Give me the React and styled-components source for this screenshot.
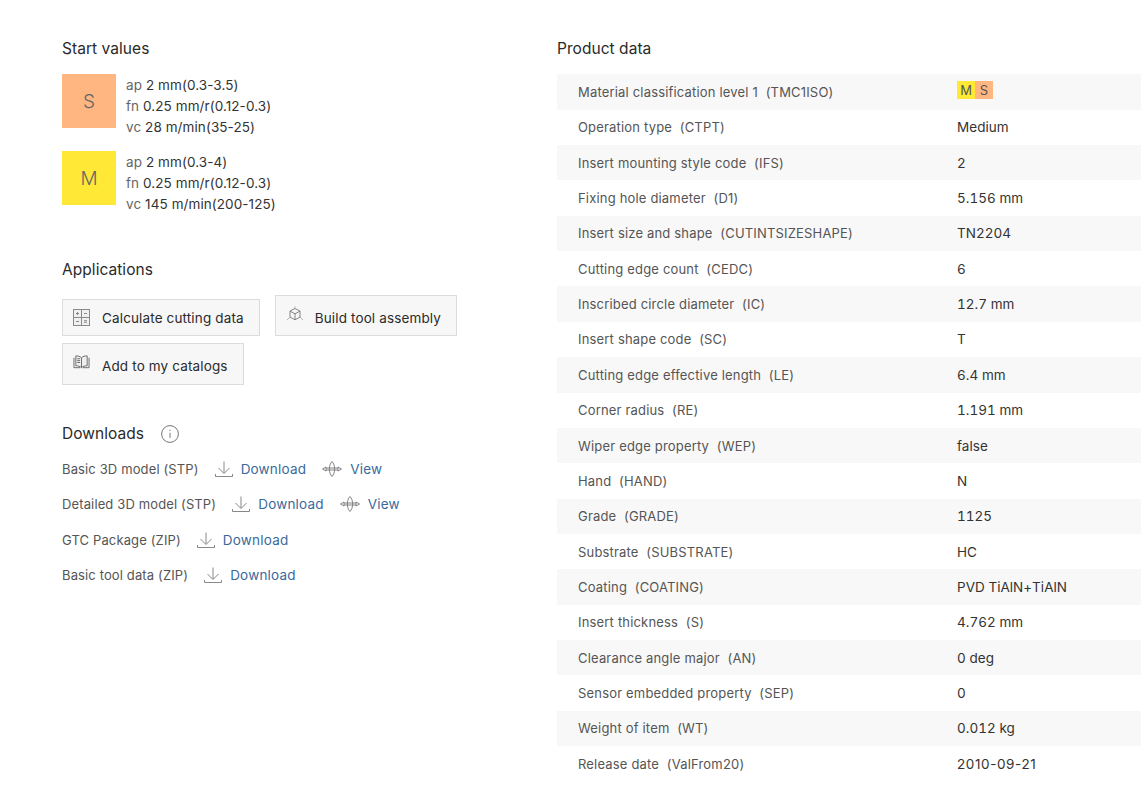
import React from "react";
import styled, { createGlobalStyle } from "styled-components";

const GlobalStyle = createGlobalStyle`
  html, body {
    margin: 0;
    padding: 0;
    background: #fff;
  }
  body {
    font-family: Inter, "Liberation Sans", Arial, sans-serif;
    color: #2b2b2b;
    overflow: hidden;
  }
`;

const Page = styled.div`
  display: grid;
  grid-template-columns: 495px 584px;
  padding: 38px 0 0 62px;
  width: 1141px;
  height: 807px;
  box-sizing: border-box;
`;

const Column = styled.div`
  display: flex;
  flex-direction: column;
`;

const Heading = styled.h2`
  margin: 0;
  font-size: 15.5px;
  line-height: 21px;
  font-weight: 400;
  color: #2a2a2a;
  letter-spacing: 0.05px;
`;

const StartList = styled.div`
  display: flex;
  flex-direction: column;
  gap: 13px;
  margin-top: 15px;
`;

const StartRow = styled.div`
  display: flex;
  gap: 10px;
`;

const MaterialBox = styled.div`
  width: 54px;
  height: 54px;
  display: flex;
  align-items: center;
  justify-content: center;
  background: ${(p) => p.$color};
  color: #666;
  font-size: 19px;
  font-weight: 300;
`;

const StartText = styled.div`
  font-size: 13.5px;
  line-height: 21px;
  color: #333;
  letter-spacing: 0.08px;
  margin-top: 1px;
  span {
    color: #666;
  }
`;

const AppSection = styled.div`
  margin-top: 44px;
`;

const ButtonWrap = styled.div`
  display: flex;
  flex-wrap: wrap;
  align-items: flex-end;
  column-gap: 15px;
  row-gap: 7px;
  margin-top: 15px;
  width: 420px;
`;

const AppButton = styled.div`
  display: flex;
  align-items: center;
  gap: ${(p) => p.$gap}px;
  height: ${(p) => p.$h}px;
  box-sizing: border-box;
  padding: ${(p) => p.$top}px 15px 0 10px;
  background: #f7f7f7;
  border: 1px solid #dcdcdc;
  font-size: 13.5px;
  color: #2a2a2a;
  letter-spacing: 0.14px;
  white-space: nowrap;
  svg {
    flex: none;
    margin-top: ${(p) => p.$iconShift}px;
  }
`;

const DownloadSection = styled.div`
  margin-top: 38px;
`;

const DownloadHead = styled.div`
  display: flex;
  align-items: center;
  gap: 17px;
`;

const DownloadList = styled.div`
  display: flex;
  flex-direction: column;
  gap: 15.4px;
  margin-top: 15px;
`;

const DownloadRow = styled.div`
  display: flex;
  align-items: center;
  height: 20px;
  font-size: 13px;
  color: #555;
  letter-spacing: 0.13px;
  white-space: nowrap;
`;

const FileLink = styled.a`
  display: flex;
  align-items: center;
  gap: 8px;
  margin-left: ${(p) => p.$left}px;
  color: #3a6a9c;
  font-size: 13.5px;
  letter-spacing: 0.2px;
  cursor: pointer;
`;

const DataTable = styled.div`
  display: flex;
  flex-direction: column;
  margin-top: 15.3px;
`;

const DataRow = styled.div`
  display: grid;
  grid-template-columns: 379px 1fr;
  align-items: center;
  height: 35.37px;
  padding-left: 21px;
  background: ${(p) => (p.$shade ? "#f8f8f8" : "#fff")};
`;

const DataLabel = styled.div`
  font-size: 13px;
  color: #555;
  letter-spacing: 0.18px;
  white-space: pre;
`;

const DataValue = styled.div`
  font-size: 13.5px;
  color: #333;
  font-variant-numeric: ${(p) => (p.$date ? "normal" : "tabular-nums")};
  letter-spacing: ${(p) => (p.$date ? "0.6px" : "0.03px")};
`;

const TagGroup = styled.div`
  display: flex;
  margin-top: -4px;
`;

const Tag = styled.span`
  width: 18px;
  height: 18px;
  display: flex;
  align-items: center;
  justify-content: center;
  background: ${(p) => p.$color};
  color: #555;
  font-size: 13px;
`;

const GridIcon = () => (
  <svg width="17" height="17" viewBox="0 0 17 17" fill="none" stroke="#8a8a8a" strokeWidth="1">
    <rect x="0.5" y="0.5" width="16" height="16" fill="#f0f0f0" />
    <path d="M8.5 0.5v16M0.5 8.5h16" />
    <path d="M3 4.5h3M4.5 3v3M11 4.5h3M3 12.5h3M11 11.7h3M11 13.3h3" />
  </svg>
);

const CubeIcon = () => (
  <svg width="18" height="18" viewBox="0 0 18 18" fill="none" stroke="#777" strokeWidth="0.9">
    <path d="M9 2.5l5 2.6v6l-5 2.7-5-2.7v-6z" />
    <path d="M4 5.100l5 2.700 5-2.700M9 7.800v6" />
    <path d="M9 0.500v2M1 14l3-2.900M17 14l-3-2.900" stroke="#aaa" />
  </svg>
);

const BookIcon = () => (
  <svg width="17" height="17" viewBox="0 0 18 17" fill="none" stroke="#666" strokeWidth="1">
    <path d="M9 3.500C7.500 2 5.500 1.500 3 1.500v10.500c2.500 0 4.500.5 6 2 1.500-1.500 3.500-2 6-2V1.500c-2.500 0-4.500.5-6 2z" fill="#f0f0f0" />
    <path d="M9 3.500V14M1 3.500v10.500h6.500M17 3.500v10.500h-6.500" />
    <path d="M4.500 4.500h3M4.500 6.500h3M4.500 8.500h3" />
  </svg>
);

const InfoIcon = () => (
  <svg width="18" height="18" viewBox="0 0 18 18" fill="none" stroke="#666" strokeWidth="0.9">
    <circle cx="9" cy="9" r="8.400" />
    <path d="M9 7.800v5M9 4.800v1.200" />
  </svg>
);

const DownloadIcon = () => (
  <svg width="18" height="16" viewBox="0 0 18 16" fill="none" stroke="#888" strokeWidth="1">
    <path d="M9 0.500v11.500M3.500 7l5.500 5.500 5.500-5.500" />
    <path d="M0.500 13v2.500h17v-2.500" />
  </svg>
);

const ViewIcon = () => (
  <svg width="20" height="16" viewBox="0 0 20 16" fill="none" stroke="#777" strokeWidth="0.9">
    <path d="M10 0.500C6.500 4 6.500 12 10 15.500 13.500 12 13.500 4 10 0.500z" />
    <path d="M0.500 8l3.500-2v4zM19.500 8l-3.500-2v4z" />
    <path d="M4 7h12M4 9h12" />
  </svg>
);

const productData = [
  ["Material classification level 1  (TMC1ISO)", null],
  ["Operation type  (CTPT)", "Medium"],
  ["Insert mounting style code  (IFS)", "2"],
  ["Fixing hole diameter  (D1)", "5.156 mm"],
  ["Insert size and shape  (CUTINTSIZESHAPE)", "TN2204"],
  ["Cutting edge count  (CEDC)", "6"],
  ["Inscribed circle diameter  (IC)", "12.7 mm"],
  ["Insert shape code  (SC)", "T"],
  ["Cutting edge effective length  (LE)", "6.4 mm"],
  ["Corner radius  (RE)", "1.191 mm"],
  ["Wiper edge property  (WEP)", "false"],
  ["Hand  (HAND)", "N"],
  ["Grade  (GRADE)", "1125"],
  ["Substrate  (SUBSTRATE)", "HC"],
  ["Coating  (COATING)", "PVD TiAlN+TiAlN"],
  ["Insert thickness  (S)", "4.762 mm"],
  ["Clearance angle major  (AN)", "0 deg"],
  ["Sensor embedded property  (SEP)", "0"],
  ["Weight of item  (WT)", "0.012 kg"],
  ["Release date  (ValFrom20)", "2010-09-21"],
];

const startValues = [
  { mat: "S", color: "#ffb681", lines: [["ap", "2 mm(0.3-3.5)"], ["fn", "0.25 mm/r(0.12-0.3)"], ["vc", "28 m/min(35-25)"]] },
  { mat: "M", color: "#ffe936", lines: [["ap", "2 mm(0.3-4)"], ["fn", "0.25 mm/r(0.12-0.3)"], ["vc", "145 m/min(200-125)"]] },
];

const downloads = [
  { name: "Basic 3D model (STP)", view: true },
  { name: "Detailed 3D model (STP)", view: true },
  { name: "GTC Package (ZIP)" },
  { name: "Basic tool data (ZIP)" },
];

const App = () => {
  return (
    <Page>
      <GlobalStyle />
      <Column>
        <Heading>Start values</Heading>
        <StartList>
          {startValues.map((item) => (
            <StartRow key={item.mat}>
              <MaterialBox $color={item.color}>{item.mat}</MaterialBox>
              <StartText>
                {item.lines.map(([key, val]) => (
                  <div key={key}>
                    <span>{key}</span> {val}
                  </div>
                ))}
              </StartText>
            </StartRow>
          ))}
        </StartList>

        <AppSection>
          <Heading>Applications</Heading>
          <ButtonWrap>
            <AppButton $h={37} $top={0} $gap={12} $iconShift={-1}>
              <GridIcon />
              Calculate cutting data
            </AppButton>
            <AppButton $h={41} $top={5} $gap={11} $iconShift={-6}>
              <CubeIcon />
              Build tool assembly
            </AppButton>
            <AppButton $h={42} $top={3} $gap={12} $iconShift={-6}>
              <BookIcon />
              Add to my catalogs
            </AppButton>
          </ButtonWrap>
        </AppSection>

        <DownloadSection>
          <DownloadHead>
            <Heading>Downloads</Heading>
            <InfoIcon />
          </DownloadHead>
          <DownloadList>
            {downloads.map((d) => (
              <DownloadRow key={d.name}>
                {d.name}
                <FileLink $left={16}>
                  <DownloadIcon />
                  Download
                </FileLink>
                {d.view && (
                  <FileLink $left={16}>
                    <ViewIcon />
                    View
                  </FileLink>
                )}
              </DownloadRow>
            ))}
          </DownloadList>
        </DownloadSection>
      </Column>

      <Column>
        <Heading>Product data</Heading>
        <DataTable>
          {productData.map(([label, value], index) => (
            <DataRow key={label} $shade={index % 2 === 0}>
              <DataLabel>{label}</DataLabel>
              {value === null ? (
                <TagGroup>
                  <Tag $color="#ffe936">M</Tag>
                  <Tag $color="#ffb681">S</Tag>
                </TagGroup>
              ) : (
                <DataValue $date={value.includes("-")}>{value}</DataValue>
              )}
            </DataRow>
          ))}
        </DataTable>
      </Column>
    </Page>
  );
};

export default App;
